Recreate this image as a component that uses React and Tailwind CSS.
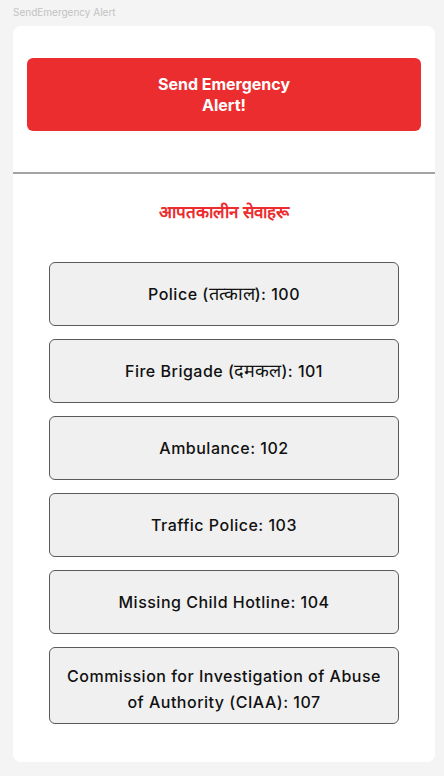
import React from "react";

const items = [
  { parts: ["Police (", "तत्काल", "): 100"] },
  { parts: ["Fire Brigade (", "दमकल", "): 101"] },
  { parts: ["Ambulance: 102"] },
  { parts: ["Traffic Police: 103"] },
  { parts: ["Missing Child Hotline: 104"] },
  { parts: ["Commission for Investigation of Abuse of Authority (CIAA): 107"], multi: true },
];

export default function App() {
  return (
    <div className="min-h-screen bg-[#f4f4f4] pl-[13px] pr-[9px] pt-[5px] pb-[14px] font-['Inter',sans-serif]">
      <div className="text-[10px] leading-[14px] text-[#c2c2c2] h-[21px]">SendEmergency Alert</div>
      <div className="bg-white rounded-lg pt-[32px] pb-[38px]">
        <div className="px-[14px]">
          <button className="w-full h-[73px] bg-[#ec2d2f] rounded-md flex items-center justify-center">
            <span className="max-w-[150px] text-white font-bold text-[16px] leading-[21px] text-center">
              Send Emergency Alert!
            </span>
          </button>
        </div>
        <div className="mt-[41px] h-[2px] bg-[#a3a3a3]" />
        <div className="mt-[26px] text-center text-[#ec2d2f] font-bold text-[17px] leading-[24px]">
          आपतकालीन सेवाहरू
        </div>
        <div className="mt-[38px] px-[36px] flex flex-col gap-[13px]">
          {items.map(({ parts: t, multi }) => (
            <div
              key={t.join("")}
              className={
                "min-h-[64px] px-3 bg-[#f0f0f0] border border-[#5a5a5a] rounded-md flex items-center justify-center text-center text-[16px] leading-[26px] tracking-[0.5px] font-medium text-[#111] " +
                (multi ? "pt-[15px] pb-[8px]" : "py-[12px]")
              }
            >
              <span>
                {t[0]}
                {t[1] && <span className="text-[18px] tracking-normal">{t[1]}</span>}
                {t[2]}
              </span>
            </div>
          ))}
        </div>
      </div>
    </div>
  );
}
